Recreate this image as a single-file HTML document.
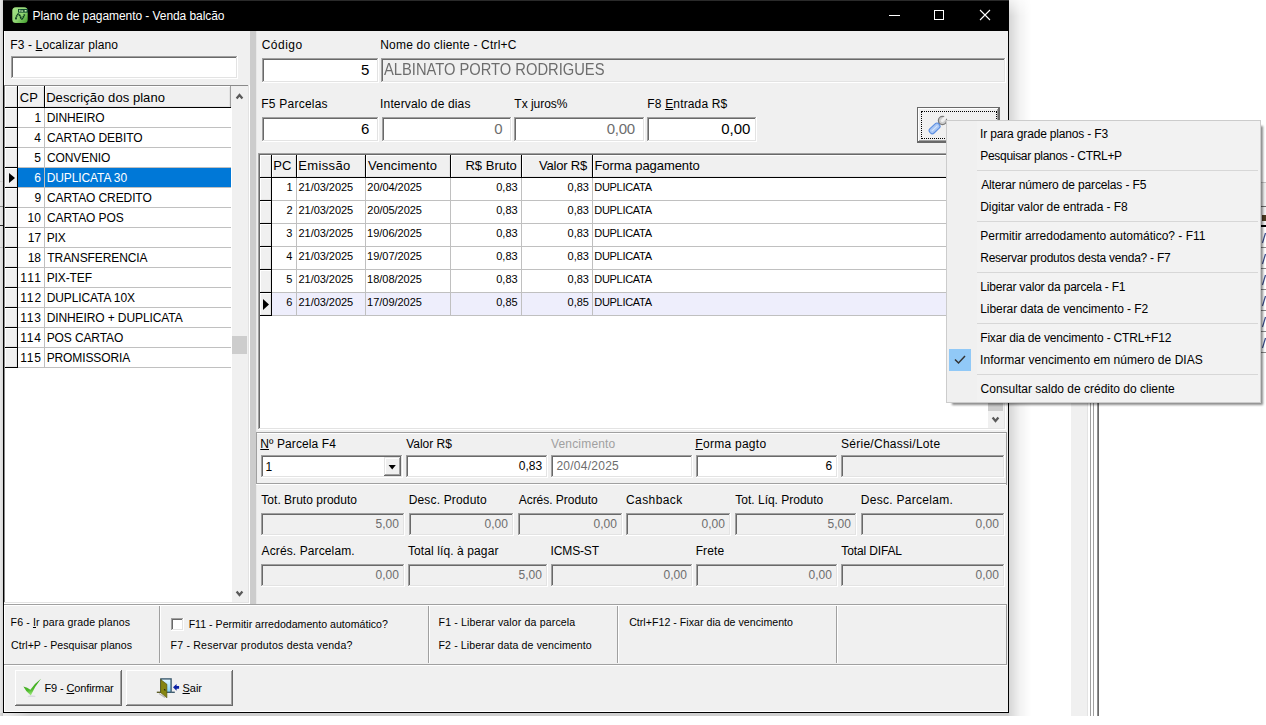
<!DOCTYPE html><html><head><meta charset="utf-8"><style>
html,body{margin:0;padding:0;}
body{width:1266px;height:725px;position:relative;overflow:hidden;background:#fff;font-family:"Liberation Sans", sans-serif;}
body div{position:absolute;box-sizing:border-box;}
.t{white-space:nowrap;line-height:1;}
u{text-decoration:underline;text-underline-offset:1px;text-decoration-thickness:1px;}
</style></head><body>
<div style="left:0;top:0;width:3px;height:716px;background:linear-gradient(90deg,#e8e8e8,#d6d6d6)"></div>
<div style="left:0px;top:181px;width:3px;height:1px;background:#cfcfcf"></div>
<div style="left:0px;top:206px;width:3px;height:1px;background:#8c8c8c"></div>
<div style="left:0px;top:225px;width:3px;height:1px;background:#2a2a2a"></div>
<div style="left:0px;top:247px;width:3px;height:1px;background:#c4c4c4"></div>
<div style="left:1071px;top:402px;width:16px;height:314px;background:#f0f0f0"></div>
<div style="left:1087px;top:402px;width:1px;height:314px;background:#e3e3e3"></div>
<div style="left:1090px;top:402px;width:1px;height:314px;background:#a0a0a0"></div>
<div style="left:1093px;top:402px;width:1px;height:314px;background:#a0a0a0"></div>
<div style="left:1097px;top:402px;width:1px;height:314px;background:#909090"></div>
<div style="left:1098px;top:402px;width:1px;height:314px;background:#6a6a6a"></div>
<div style="left:1009px;top:0px;width:22px;height:716px;background:linear-gradient(90deg,rgba(0,0,0,0.16),rgba(0,0,0,0.05) 50%,rgba(0,0,0,0));-webkit-mask-image:linear-gradient(180deg,rgba(0,0,0,0.35),#000 16px);mask-image:linear-gradient(180deg,rgba(0,0,0,0.35),#000 16px)"></div>
<div style="left:0px;top:713px;width:1009px;height:3px;background:linear-gradient(90deg,rgba(0,0,0,0.06),rgba(0,0,0,0.19) 30px,rgba(0,0,0,0.19))"></div>
<div style="left:3px;top:0px;width:1006px;height:713px;background:#000"></div>
<div style="left:4px;top:31px;width:1004px;height:681px;background:#f0f0f0"></div>
<div style="left:4px;top:31px;width:1px;height:681px;background:#ffffff"></div>
<div style="left:4px;top:711px;width:1004px;height:1px;background:#ffffff"></div>
<div style="left:3px;top:0px;width:1006px;height:1px;background:#2a2a2a"></div>
<svg style="position:absolute;left:12px;top:7px" width="16" height="16" viewBox="0 0 16 16">
<defs><linearGradient id="gi" x1="0" y1="0" x2="1" y2="1"><stop offset="0" stop-color="#a6e488"/><stop offset="0.55" stop-color="#8fd472"/><stop offset="1" stop-color="#3f9c2a"/></linearGradient></defs>
<rect x="0.3" y="0.3" width="15.4" height="15.6" rx="3.5" fill="url(#gi)"/>
<rect x="6" y="2" width="10" height="3.6" fill="#0e4a2c"/>
<rect x="7.2" y="2.8" width="1.3" height="2" fill="#c8eeb0"/><rect x="9.2" y="3.4" width="2" height="1.3" fill="#c8eeb0"/><rect x="12.6" y="3" width="2" height="1.6" fill="#c8eeb0"/>
<path d="M3.8 12.4 Q4.8 7 6.6 7.2 Q7.8 7.6 8.8 10.8 Q9.6 12.8 10.8 11.2 L12.6 7.4" stroke="#0c3a20" stroke-width="1.7" fill="none" stroke-dasharray="1.8 0.5"/>
</svg>
<div class="t" style="left:32.54px;top:10.00px;font-size:12px;color:#fff;letter-spacing:-0.069px;">Plano de pagamento - Venda balcão</div>
<div style="left:889px;top:15px;width:11px;height:1px;background:#fff"></div>
<div style="left:934px;top:10px;width:10px;height:10px;border:1px solid #fff"></div>
<svg style="position:absolute;left:979px;top:9px" width="12" height="12" viewBox="0 0 12 12"><path d="M1 1 L11 11 M11 1 L1 11" stroke="#fff" stroke-width="1.1"/></svg>
<div class="t" style="left:10.34px;top:39.00px;font-size:12px;color:#000;letter-spacing:0.120px;">F3 - <u>L</u>ocalizar plano</div>
<div style="left:11px;top:56px;width:227px;height:23px;background:#ffffff"></div>
<div style="left:11px;top:56px;width:226px;height:22px;background:#a0a0a0"></div>
<div style="left:12px;top:57px;width:225px;height:21px;background:#e3e3e3"></div>
<div style="left:12px;top:57px;width:224px;height:20px;background:#696969"></div>
<div style="left:13px;top:58px;width:223px;height:19px;background:#fff"></div>
<div style="left:4px;top:85px;width:246px;height:519px;background:#ffffff"></div>
<div style="left:4px;top:85px;width:245px;height:518px;background:#e3e3e3"></div>
<div style="left:4px;top:85px;width:244px;height:517px;background:#8a8a8a"></div>
<div style="left:5px;top:86px;width:243px;height:516px;background:#ffffff"></div>
<div style="left:232px;top:86px;width:16px;height:516px;background:#f0f0f0"></div>
<div style="left:231px;top:86px;width:1px;height:22px;background:#f0f0f0"></div>
<div style="left:232px;top:336px;width:15px;height:18px;background:#cdcdcd"></div>
<svg style="position:absolute;left:235px;top:92px" width="9" height="8" viewBox="0 0 9 8"><path d="M1.6 6.5 L4.5 3.1 L7.4 6.5" stroke="#5a5a5a" stroke-width="2.3" fill="none"/></svg>
<svg style="position:absolute;left:235px;top:590px" width="9" height="8" viewBox="0 0 9 8"><path d="M1.6 1.5 L4.5 4.9 L7.4 1.5" stroke="#5a5a5a" stroke-width="2.3" fill="none"/></svg>
<div style="left:5px;top:86px;width:13px;height:22px;background:#000"></div>
<div style="left:5px;top:86px;width:12px;height:21px;background:#ffffff"></div>
<div style="left:6px;top:87px;width:11px;height:20px;background:#e3e3e3"></div>
<div style="left:6px;top:87px;width:10px;height:19px;background:#f0f0f0"></div>
<div style="left:18px;top:86px;width:27px;height:22px;background:#000"></div>
<div style="left:18px;top:86px;width:26px;height:21px;background:#ffffff"></div>
<div style="left:19px;top:87px;width:25px;height:20px;background:#e3e3e3"></div>
<div style="left:19px;top:87px;width:24px;height:19px;background:#f0f0f0"></div>
<div style="left:45px;top:86px;width:186px;height:22px;background:#000"></div>
<div style="left:45px;top:86px;width:185px;height:21px;background:#ffffff"></div>
<div style="left:46px;top:87px;width:184px;height:20px;background:#e3e3e3"></div>
<div style="left:46px;top:87px;width:183px;height:19px;background:#f0f0f0"></div>
<div style="left:230px;top:86px;width:1px;height:21px;background:#a0a0a0"></div>
<div class="t" style="left:19.75px;top:91.00px;font-size:13px;color:#000;">CP</div>
<div class="t" style="left:46.16px;top:91.00px;font-size:13px;color:#000;letter-spacing:0.054px;">Descrição dos plano</div>
<div style="left:5px;top:108px;width:13px;height:20px;background:#000"></div>
<div style="left:5px;top:108px;width:12px;height:19px;background:#ffffff"></div>
<div style="left:6px;top:109px;width:11px;height:18px;background:#e3e3e3"></div>
<div style="left:6px;top:109px;width:10px;height:17px;background:#f0f0f0"></div>
<div style="left:18px;top:127px;width:213px;height:1px;background:#c0c0c0"></div>
<div style="left:44px;top:108px;width:1px;height:20px;background:#c0c0c0"></div>
<div class="t" style="left:-358.95px;width:400px;text-align:right;top:112.00px;font-size:12px;color:#000;">1</div>
<div class="t" style="left:46.64px;top:112.00px;font-size:12px;color:#000;letter-spacing:-0.1px;">DINHEIRO</div>
<div style="left:5px;top:128px;width:13px;height:20px;background:#000"></div>
<div style="left:5px;top:128px;width:12px;height:19px;background:#ffffff"></div>
<div style="left:6px;top:129px;width:11px;height:18px;background:#e3e3e3"></div>
<div style="left:6px;top:129px;width:10px;height:17px;background:#f0f0f0"></div>
<div style="left:18px;top:147px;width:213px;height:1px;background:#c0c0c0"></div>
<div style="left:44px;top:128px;width:1px;height:20px;background:#c0c0c0"></div>
<div class="t" style="left:-359.13px;width:400px;text-align:right;top:132.00px;font-size:12px;color:#000;">4</div>
<div class="t" style="left:47.00px;top:132.00px;font-size:12px;color:#000;letter-spacing:-0.1px;">CARTAO DEBITO</div>
<div style="left:5px;top:148px;width:13px;height:20px;background:#000"></div>
<div style="left:5px;top:148px;width:12px;height:19px;background:#ffffff"></div>
<div style="left:6px;top:149px;width:11px;height:18px;background:#e3e3e3"></div>
<div style="left:6px;top:149px;width:10px;height:17px;background:#f0f0f0"></div>
<div style="left:18px;top:167px;width:213px;height:1px;background:#c0c0c0"></div>
<div style="left:44px;top:148px;width:1px;height:20px;background:#c0c0c0"></div>
<div class="t" style="left:-359.01px;width:400px;text-align:right;top:152.00px;font-size:12px;color:#000;">5</div>
<div class="t" style="left:47.00px;top:152.00px;font-size:12px;color:#000;letter-spacing:-0.1px;">CONVENIO</div>
<div style="left:5px;top:168px;width:13px;height:20px;background:#000"></div>
<div style="left:5px;top:168px;width:12px;height:19px;background:#ffffff"></div>
<div style="left:6px;top:169px;width:11px;height:18px;background:#e3e3e3"></div>
<div style="left:6px;top:169px;width:10px;height:17px;background:#f0f0f0"></div>
<div style="left:18px;top:187px;width:213px;height:1px;background:#c0c0c0"></div>
<div style="left:44px;top:168px;width:1px;height:20px;background:#c0c0c0"></div>
<div style="left:18px;top:168px;width:26px;height:19px;background:#0078d7"></div>
<div style="left:45px;top:168px;width:186px;height:19px;background:#0078d7"></div>
<svg style="position:absolute;left:8px;top:172px" width="8" height="12" viewBox="0 0 8 12"><path d="M1 1 L7 6 L1 11 Z" fill="#000"/></svg>
<div class="t" style="left:-359.01px;width:400px;text-align:right;top:172.00px;font-size:12px;color:#fff;">6</div>
<div class="t" style="left:46.64px;top:172.00px;font-size:12px;color:#fff;letter-spacing:-0.1px;">DUPLICATA 30</div>
<div style="left:5px;top:188px;width:13px;height:20px;background:#000"></div>
<div style="left:5px;top:188px;width:12px;height:19px;background:#ffffff"></div>
<div style="left:6px;top:189px;width:11px;height:18px;background:#e3e3e3"></div>
<div style="left:6px;top:189px;width:10px;height:17px;background:#f0f0f0"></div>
<div style="left:18px;top:207px;width:213px;height:1px;background:#c0c0c0"></div>
<div style="left:44px;top:188px;width:1px;height:20px;background:#c0c0c0"></div>
<div class="t" style="left:-358.95px;width:400px;text-align:right;top:192.00px;font-size:12px;color:#000;">9</div>
<div class="t" style="left:47.00px;top:192.00px;font-size:12px;color:#000;letter-spacing:-0.1px;">CARTAO CREDITO</div>
<div style="left:5px;top:208px;width:13px;height:20px;background:#000"></div>
<div style="left:5px;top:208px;width:12px;height:19px;background:#ffffff"></div>
<div style="left:6px;top:209px;width:11px;height:18px;background:#e3e3e3"></div>
<div style="left:6px;top:209px;width:10px;height:17px;background:#f0f0f0"></div>
<div style="left:18px;top:227px;width:213px;height:1px;background:#c0c0c0"></div>
<div style="left:44px;top:208px;width:1px;height:20px;background:#c0c0c0"></div>
<div class="t" style="left:-359.05px;width:400px;text-align:right;top:212.00px;font-size:12px;color:#000;">10</div>
<div class="t" style="left:47.00px;top:212.00px;font-size:12px;color:#000;letter-spacing:-0.1px;">CARTAO POS</div>
<div style="left:5px;top:228px;width:13px;height:20px;background:#000"></div>
<div style="left:5px;top:228px;width:12px;height:19px;background:#ffffff"></div>
<div style="left:6px;top:229px;width:11px;height:18px;background:#e3e3e3"></div>
<div style="left:6px;top:229px;width:10px;height:17px;background:#f0f0f0"></div>
<div style="left:18px;top:247px;width:213px;height:1px;background:#c0c0c0"></div>
<div style="left:44px;top:228px;width:1px;height:20px;background:#c0c0c0"></div>
<div class="t" style="left:-358.87px;width:400px;text-align:right;top:232.00px;font-size:12px;color:#000;">17</div>
<div class="t" style="left:46.64px;top:232.00px;font-size:12px;color:#000;letter-spacing:-0.1px;">PIX</div>
<div style="left:5px;top:248px;width:13px;height:20px;background:#000"></div>
<div style="left:5px;top:248px;width:12px;height:19px;background:#ffffff"></div>
<div style="left:6px;top:249px;width:11px;height:18px;background:#e3e3e3"></div>
<div style="left:6px;top:249px;width:10px;height:17px;background:#f0f0f0"></div>
<div style="left:18px;top:267px;width:213px;height:1px;background:#c0c0c0"></div>
<div style="left:44px;top:248px;width:1px;height:20px;background:#c0c0c0"></div>
<div class="t" style="left:-358.99px;width:400px;text-align:right;top:252.00px;font-size:12px;color:#000;">18</div>
<div class="t" style="left:47.36px;top:252.00px;font-size:12px;color:#000;letter-spacing:-0.1px;">TRANSFERENCIA</div>
<div style="left:5px;top:268px;width:13px;height:20px;background:#000"></div>
<div style="left:5px;top:268px;width:12px;height:19px;background:#ffffff"></div>
<div style="left:6px;top:269px;width:11px;height:18px;background:#e3e3e3"></div>
<div style="left:6px;top:269px;width:10px;height:17px;background:#f0f0f0"></div>
<div style="left:18px;top:287px;width:213px;height:1px;background:#c0c0c0"></div>
<div style="left:44px;top:268px;width:1px;height:20px;background:#c0c0c0"></div>
<div class="t" style="left:-357.66px;width:400px;text-align:right;top:272.00px;font-size:12px;color:#000;letter-spacing:1.300px;">111</div>
<div class="t" style="left:46.64px;top:272.00px;font-size:12px;color:#000;letter-spacing:-0.1px;">PIX-TEF</div>
<div style="left:5px;top:288px;width:13px;height:20px;background:#000"></div>
<div style="left:5px;top:288px;width:12px;height:19px;background:#ffffff"></div>
<div style="left:6px;top:289px;width:11px;height:18px;background:#e3e3e3"></div>
<div style="left:6px;top:289px;width:10px;height:17px;background:#f0f0f0"></div>
<div style="left:18px;top:307px;width:213px;height:1px;background:#c0c0c0"></div>
<div style="left:44px;top:288px;width:1px;height:20px;background:#c0c0c0"></div>
<div class="t" style="left:-358.03px;width:400px;text-align:right;top:292.00px;font-size:12px;color:#000;letter-spacing:0.880px;">112</div>
<div class="t" style="left:46.64px;top:292.00px;font-size:12px;color:#000;letter-spacing:-0.1px;">DUPLICATA 10X</div>
<div style="left:5px;top:308px;width:13px;height:20px;background:#000"></div>
<div style="left:5px;top:308px;width:12px;height:19px;background:#ffffff"></div>
<div style="left:6px;top:309px;width:11px;height:18px;background:#e3e3e3"></div>
<div style="left:6px;top:309px;width:10px;height:17px;background:#f0f0f0"></div>
<div style="left:18px;top:327px;width:213px;height:1px;background:#c0c0c0"></div>
<div style="left:44px;top:308px;width:1px;height:20px;background:#c0c0c0"></div>
<div class="t" style="left:-358.21px;width:400px;text-align:right;top:312.00px;font-size:12px;color:#000;letter-spacing:0.820px;">113</div>
<div class="t" style="left:46.64px;top:312.00px;font-size:12px;color:#000;letter-spacing:-0.1px;">DINHEIRO + DUPLICATA</div>
<div style="left:5px;top:328px;width:13px;height:20px;background:#000"></div>
<div style="left:5px;top:328px;width:12px;height:19px;background:#ffffff"></div>
<div style="left:6px;top:329px;width:11px;height:18px;background:#e3e3e3"></div>
<div style="left:6px;top:329px;width:10px;height:17px;background:#f0f0f0"></div>
<div style="left:18px;top:347px;width:213px;height:1px;background:#c0c0c0"></div>
<div style="left:44px;top:328px;width:1px;height:20px;background:#c0c0c0"></div>
<div class="t" style="left:-358.39px;width:400px;text-align:right;top:332.00px;font-size:12px;color:#000;letter-spacing:0.760px;">114</div>
<div class="t" style="left:46.64px;top:332.00px;font-size:12px;color:#000;letter-spacing:-0.1px;">POS CARTAO</div>
<div style="left:5px;top:348px;width:13px;height:20px;background:#000"></div>
<div style="left:5px;top:348px;width:12px;height:19px;background:#ffffff"></div>
<div style="left:6px;top:349px;width:11px;height:18px;background:#e3e3e3"></div>
<div style="left:6px;top:349px;width:10px;height:17px;background:#f0f0f0"></div>
<div style="left:18px;top:367px;width:213px;height:1px;background:#c0c0c0"></div>
<div style="left:44px;top:348px;width:1px;height:20px;background:#c0c0c0"></div>
<div class="t" style="left:-358.21px;width:400px;text-align:right;top:352.00px;font-size:12px;color:#000;letter-spacing:0.820px;">115</div>
<div class="t" style="left:46.64px;top:352.00px;font-size:12px;color:#000;letter-spacing:-0.1px;">PROMISSORIA</div>
<div style="left:250px;top:31px;width:6px;height:573px;background:#cccccc"></div>
<div style="left:256px;top:31px;width:1px;height:573px;background:#e8e8e8"></div>
<div class="t" style="left:261.70px;top:39.00px;font-size:12px;color:#000;letter-spacing:0.488px;">Código</div>
<div class="t" style="left:380.24px;top:39.00px;font-size:12px;color:#000;letter-spacing:0.195px;">Nome do cliente - Ctrl+C</div>
<div style="left:262px;top:58px;width:117px;height:25px;background:#ffffff"></div>
<div style="left:262px;top:58px;width:116px;height:24px;background:#a0a0a0"></div>
<div style="left:263px;top:59px;width:115px;height:23px;background:#e3e3e3"></div>
<div style="left:263px;top:59px;width:114px;height:22px;background:#696969"></div>
<div style="left:264px;top:60px;width:113px;height:21px;background:#fff"></div>
<div class="t" style="left:-30.78px;width:400px;text-align:right;top:62.00px;font-size:15px;color:#000;">5</div>
<div style="left:381px;top:58px;width:625px;height:25px;background:#ffffff"></div>
<div style="left:381px;top:58px;width:624px;height:24px;background:#a0a0a0"></div>
<div style="left:382px;top:59px;width:623px;height:23px;background:#e3e3e3"></div>
<div style="left:382px;top:59px;width:622px;height:22px;background:#696969"></div>
<div style="left:383px;top:60px;width:621px;height:21px;background:#f0f0f0"></div>
<div class="t" style="left:383.90px;top:62.00px;font-size:16px;color:#6d6d6d;transform:scaleX(0.9195);transform-origin:0 0;">ALBINATO PORTO RODRIGUES</div>
<div class="t" style="left:261.24px;top:98.00px;font-size:12px;color:#000;letter-spacing:0.236px;">F5 Parcelas</div>
<div class="t" style="left:380.12px;top:98.00px;font-size:12px;color:#000;letter-spacing:0.139px;">Intervalo de dias</div>
<div class="t" style="left:514.36px;top:98.00px;font-size:12px;color:#000;letter-spacing:-0.023px;">Tx juros%</div>
<div class="t" style="left:647.34px;top:98.00px;font-size:12px;color:#000;letter-spacing:0.153px;">F8 <u>E</u>ntrada R$</div>
<div style="left:262px;top:117px;width:117px;height:25px;background:#ffffff"></div>
<div style="left:262px;top:117px;width:116px;height:24px;background:#a0a0a0"></div>
<div style="left:263px;top:118px;width:115px;height:23px;background:#e3e3e3"></div>
<div style="left:263px;top:118px;width:114px;height:22px;background:#696969"></div>
<div style="left:264px;top:119px;width:113px;height:21px;background:#fff"></div>
<div class="t" style="left:-30.78px;width:400px;text-align:right;top:121.00px;font-size:15px;color:#000;">6</div>
<div style="left:382px;top:117px;width:130px;height:25px;background:#ffffff"></div>
<div style="left:382px;top:117px;width:129px;height:24px;background:#a0a0a0"></div>
<div style="left:383px;top:118px;width:128px;height:23px;background:#e3e3e3"></div>
<div style="left:383px;top:118px;width:127px;height:22px;background:#696969"></div>
<div style="left:384px;top:119px;width:126px;height:21px;background:#fff"></div>
<div class="t" style="left:102.54px;width:400px;text-align:right;top:121.00px;font-size:15px;color:#6d6d6d;">0</div>
<div style="left:514px;top:117px;width:131px;height:25px;background:#ffffff"></div>
<div style="left:514px;top:117px;width:130px;height:24px;background:#a0a0a0"></div>
<div style="left:515px;top:118px;width:129px;height:23px;background:#e3e3e3"></div>
<div style="left:515px;top:118px;width:128px;height:22px;background:#696969"></div>
<div style="left:516px;top:119px;width:127px;height:21px;background:#fff"></div>
<div class="t" style="left:234.76px;width:400px;text-align:right;top:121.00px;font-size:15px;color:#6d6d6d;letter-spacing:-0.283px;">0,00</div>
<div style="left:647px;top:117px;width:110px;height:25px;background:#ffffff"></div>
<div style="left:647px;top:117px;width:109px;height:24px;background:#a0a0a0"></div>
<div style="left:648px;top:118px;width:108px;height:23px;background:#e3e3e3"></div>
<div style="left:648px;top:118px;width:107px;height:22px;background:#696969"></div>
<div style="left:649px;top:119px;width:106px;height:21px;background:#fff"></div>
<div class="t" style="left:350.34px;width:400px;text-align:right;top:121.00px;font-size:15px;color:#000;">0,00</div>
<div style="left:917px;top:107px;width:83px;height:36px;background:#696969"></div>
<div style="left:918px;top:108px;width:80px;height:33px;background:#ffffff"></div>
<div style="left:919px;top:109px;width:79px;height:32px;background:#a0a0a0"></div>
<div style="left:919px;top:109px;width:78px;height:31px;background:#f0f0f0"></div>
<div style="left:921px;top:111px;width:76px;height:28px;border:1px dotted #000"></div>
<svg style="position:absolute;left:924px;top:112px" width="26" height="26" viewBox="0 0 26 26">
<path d="M14.4 12.2 L17.2 9.4" stroke="#8a8a8a" stroke-width="2.6"/>
<circle cx="18.5" cy="8.5" r="4.1" fill="#cfcfcf" stroke="#7a7a7a" stroke-width="1.3"/>
<path d="M18.8 8.2 L23.8 3.2" stroke="#f0f0f0" stroke-width="3.2"/>
<circle cx="18.4" cy="8.6" r="1.6" fill="#f0f0f0"/>
<g transform="rotate(-43 10.6 16.4)"><rect x="4.5" y="13.4" width="12.2" height="6" rx="2.6" fill="#a9c7f4" stroke="#5b8ee2" stroke-width="1.1"/><rect x="6.6" y="15.9" width="8" height="1.1" fill="#d6e5fb"/></g>
</svg>
<div style="left:258px;top:153px;width:748px;height:277px;background:#ffffff"></div>
<div style="left:258px;top:153px;width:747px;height:276px;background:#a0a0a0"></div>
<div style="left:259px;top:154px;width:746px;height:275px;background:#e3e3e3"></div>
<div style="left:259px;top:154px;width:745px;height:274px;background:#696969"></div>
<div style="left:260px;top:155px;width:744px;height:273px;background:#ffffff"></div>
<div style="left:988px;top:155px;width:16px;height:273px;background:#f0f0f0"></div>
<div style="left:988px;top:300px;width:15px;height:111px;background:#cdcdcd"></div>
<svg style="position:absolute;left:991px;top:416px" width="9" height="8" viewBox="0 0 9 8"><path d="M1.6 1.5 L4.5 4.9 L7.4 1.5" stroke="#5a5a5a" stroke-width="2.3" fill="none"/></svg>
<div style="left:260px;top:155px;width:12px;height:23px;background:#000"></div>
<div style="left:260px;top:155px;width:11px;height:22px;background:#ffffff"></div>
<div style="left:261px;top:156px;width:10px;height:21px;background:#e3e3e3"></div>
<div style="left:261px;top:156px;width:9px;height:20px;background:#f0f0f0"></div>
<div style="left:272px;top:155px;width:25px;height:23px;background:#000"></div>
<div style="left:272px;top:155px;width:24px;height:22px;background:#ffffff"></div>
<div style="left:273px;top:156px;width:23px;height:21px;background:#e3e3e3"></div>
<div style="left:273px;top:156px;width:22px;height:20px;background:#f0f0f0"></div>
<div style="left:297px;top:155px;width:69px;height:23px;background:#000"></div>
<div style="left:297px;top:155px;width:68px;height:22px;background:#ffffff"></div>
<div style="left:298px;top:156px;width:67px;height:21px;background:#e3e3e3"></div>
<div style="left:298px;top:156px;width:66px;height:20px;background:#f0f0f0"></div>
<div style="left:366px;top:155px;width:85px;height:23px;background:#000"></div>
<div style="left:366px;top:155px;width:84px;height:22px;background:#ffffff"></div>
<div style="left:367px;top:156px;width:83px;height:21px;background:#e3e3e3"></div>
<div style="left:367px;top:156px;width:82px;height:20px;background:#f0f0f0"></div>
<div style="left:451px;top:155px;width:71px;height:23px;background:#000"></div>
<div style="left:451px;top:155px;width:70px;height:22px;background:#ffffff"></div>
<div style="left:452px;top:156px;width:69px;height:21px;background:#e3e3e3"></div>
<div style="left:452px;top:156px;width:68px;height:20px;background:#f0f0f0"></div>
<div style="left:522px;top:155px;width:71px;height:23px;background:#000"></div>
<div style="left:522px;top:155px;width:70px;height:22px;background:#ffffff"></div>
<div style="left:523px;top:156px;width:69px;height:21px;background:#e3e3e3"></div>
<div style="left:523px;top:156px;width:68px;height:20px;background:#f0f0f0"></div>
<div style="left:593px;top:155px;width:395px;height:23px;background:#000"></div>
<div style="left:593px;top:155px;width:394px;height:22px;background:#ffffff"></div>
<div style="left:594px;top:156px;width:393px;height:21px;background:#e3e3e3"></div>
<div style="left:594px;top:156px;width:392px;height:20px;background:#f0f0f0"></div>
<div class="t" style="left:273.26px;top:159.00px;font-size:13px;color:#000;">PC</div>
<div class="t" style="left:298.16px;top:159.00px;font-size:13px;color:#000;letter-spacing:0.367px;">Emissão</div>
<div class="t" style="left:368.04px;top:159.00px;font-size:13px;color:#000;letter-spacing:0.118px;">Vencimento</div>
<div class="t" style="left:116.85px;width:400px;text-align:right;top:159.00px;font-size:13px;color:#000;letter-spacing:0.011px;">R$ Bruto</div>
<div class="t" style="left:187.12px;width:400px;text-align:right;top:159.00px;font-size:13px;color:#000;letter-spacing:-0.191px;">Valor R$</div>
<div class="t" style="left:594.46px;top:159.00px;font-size:13px;color:#000;letter-spacing:-0.061px;">Forma pagamento</div>
<div style="left:260px;top:178px;width:12px;height:23px;background:#000"></div>
<div style="left:260px;top:178px;width:11px;height:22px;background:#ffffff"></div>
<div style="left:261px;top:179px;width:10px;height:21px;background:#e3e3e3"></div>
<div style="left:261px;top:179px;width:9px;height:20px;background:#f0f0f0"></div>
<div style="left:272px;top:200px;width:716px;height:1px;background:#c0c0c0"></div>
<div style="left:296px;top:178px;width:1px;height:23px;background:#c0c0c0"></div>
<div style="left:365px;top:178px;width:1px;height:23px;background:#c0c0c0"></div>
<div style="left:450px;top:178px;width:1px;height:23px;background:#c0c0c0"></div>
<div style="left:521px;top:178px;width:1px;height:23px;background:#c0c0c0"></div>
<div style="left:592px;top:178px;width:1px;height:23px;background:#c0c0c0"></div>
<div class="t" style="left:-107.49px;width:400px;text-align:right;top:182.00px;font-size:11px;color:#000;">1</div>
<div class="t" style="left:298.55px;top:182.00px;font-size:11px;color:#000;letter-spacing:-0.052px;">21/03/2025</div>
<div class="t" style="left:367.35px;top:182.00px;font-size:11px;color:#000;letter-spacing:-0.052px;">20/04/2025</div>
<div class="t" style="left:117.65px;width:400px;text-align:right;top:182.00px;font-size:11px;color:#000;">0,83</div>
<div class="t" style="left:188.95px;width:400px;text-align:right;top:182.00px;font-size:11px;color:#000;">0,83</div>
<div class="t" style="left:594.22px;top:182.00px;font-size:11px;color:#000;letter-spacing:-0.285px;">DUPLICATA</div>
<div style="left:260px;top:201px;width:12px;height:23px;background:#000"></div>
<div style="left:260px;top:201px;width:11px;height:22px;background:#ffffff"></div>
<div style="left:261px;top:202px;width:10px;height:21px;background:#e3e3e3"></div>
<div style="left:261px;top:202px;width:9px;height:20px;background:#f0f0f0"></div>
<div style="left:272px;top:223px;width:716px;height:1px;background:#c0c0c0"></div>
<div style="left:296px;top:201px;width:1px;height:23px;background:#c0c0c0"></div>
<div style="left:365px;top:201px;width:1px;height:23px;background:#c0c0c0"></div>
<div style="left:450px;top:201px;width:1px;height:23px;background:#c0c0c0"></div>
<div style="left:521px;top:201px;width:1px;height:23px;background:#c0c0c0"></div>
<div style="left:592px;top:201px;width:1px;height:23px;background:#c0c0c0"></div>
<div class="t" style="left:-107.44px;width:400px;text-align:right;top:205.00px;font-size:11px;color:#000;">2</div>
<div class="t" style="left:298.55px;top:205.00px;font-size:11px;color:#000;letter-spacing:-0.052px;">21/03/2025</div>
<div class="t" style="left:367.35px;top:205.00px;font-size:11px;color:#000;letter-spacing:-0.052px;">20/05/2025</div>
<div class="t" style="left:117.65px;width:400px;text-align:right;top:205.00px;font-size:11px;color:#000;">0,83</div>
<div class="t" style="left:188.95px;width:400px;text-align:right;top:205.00px;font-size:11px;color:#000;">0,83</div>
<div class="t" style="left:594.22px;top:205.00px;font-size:11px;color:#000;letter-spacing:-0.285px;">DUPLICATA</div>
<div style="left:260px;top:224px;width:12px;height:23px;background:#000"></div>
<div style="left:260px;top:224px;width:11px;height:22px;background:#ffffff"></div>
<div style="left:261px;top:225px;width:10px;height:21px;background:#e3e3e3"></div>
<div style="left:261px;top:225px;width:9px;height:20px;background:#f0f0f0"></div>
<div style="left:272px;top:246px;width:716px;height:1px;background:#c0c0c0"></div>
<div style="left:296px;top:224px;width:1px;height:23px;background:#c0c0c0"></div>
<div style="left:365px;top:224px;width:1px;height:23px;background:#c0c0c0"></div>
<div style="left:450px;top:224px;width:1px;height:23px;background:#c0c0c0"></div>
<div style="left:521px;top:224px;width:1px;height:23px;background:#c0c0c0"></div>
<div style="left:592px;top:224px;width:1px;height:23px;background:#c0c0c0"></div>
<div class="t" style="left:-107.55px;width:400px;text-align:right;top:228.00px;font-size:11px;color:#000;">3</div>
<div class="t" style="left:298.55px;top:228.00px;font-size:11px;color:#000;letter-spacing:-0.052px;">21/03/2025</div>
<div class="t" style="left:367.07px;top:228.00px;font-size:11px;color:#000;letter-spacing:-0.021px;">19/06/2025</div>
<div class="t" style="left:117.65px;width:400px;text-align:right;top:228.00px;font-size:11px;color:#000;">0,83</div>
<div class="t" style="left:188.95px;width:400px;text-align:right;top:228.00px;font-size:11px;color:#000;">0,83</div>
<div class="t" style="left:594.22px;top:228.00px;font-size:11px;color:#000;letter-spacing:-0.285px;">DUPLICATA</div>
<div style="left:260px;top:247px;width:12px;height:23px;background:#000"></div>
<div style="left:260px;top:247px;width:11px;height:22px;background:#ffffff"></div>
<div style="left:261px;top:248px;width:10px;height:21px;background:#e3e3e3"></div>
<div style="left:261px;top:248px;width:9px;height:20px;background:#f0f0f0"></div>
<div style="left:272px;top:269px;width:716px;height:1px;background:#c0c0c0"></div>
<div style="left:296px;top:247px;width:1px;height:23px;background:#c0c0c0"></div>
<div style="left:365px;top:247px;width:1px;height:23px;background:#c0c0c0"></div>
<div style="left:450px;top:247px;width:1px;height:23px;background:#c0c0c0"></div>
<div style="left:521px;top:247px;width:1px;height:23px;background:#c0c0c0"></div>
<div style="left:592px;top:247px;width:1px;height:23px;background:#c0c0c0"></div>
<div class="t" style="left:-107.66px;width:400px;text-align:right;top:251.00px;font-size:11px;color:#000;">4</div>
<div class="t" style="left:298.55px;top:251.00px;font-size:11px;color:#000;letter-spacing:-0.052px;">21/03/2025</div>
<div class="t" style="left:367.07px;top:251.00px;font-size:11px;color:#000;letter-spacing:-0.021px;">19/07/2025</div>
<div class="t" style="left:117.65px;width:400px;text-align:right;top:251.00px;font-size:11px;color:#000;">0,83</div>
<div class="t" style="left:188.95px;width:400px;text-align:right;top:251.00px;font-size:11px;color:#000;">0,83</div>
<div class="t" style="left:594.22px;top:251.00px;font-size:11px;color:#000;letter-spacing:-0.285px;">DUPLICATA</div>
<div style="left:260px;top:270px;width:12px;height:23px;background:#000"></div>
<div style="left:260px;top:270px;width:11px;height:22px;background:#ffffff"></div>
<div style="left:261px;top:271px;width:10px;height:21px;background:#e3e3e3"></div>
<div style="left:261px;top:271px;width:9px;height:20px;background:#f0f0f0"></div>
<div style="left:272px;top:292px;width:716px;height:1px;background:#c0c0c0"></div>
<div style="left:296px;top:270px;width:1px;height:23px;background:#c0c0c0"></div>
<div style="left:365px;top:270px;width:1px;height:23px;background:#c0c0c0"></div>
<div style="left:450px;top:270px;width:1px;height:23px;background:#c0c0c0"></div>
<div style="left:521px;top:270px;width:1px;height:23px;background:#c0c0c0"></div>
<div style="left:592px;top:270px;width:1px;height:23px;background:#c0c0c0"></div>
<div class="t" style="left:-107.55px;width:400px;text-align:right;top:274.00px;font-size:11px;color:#000;">5</div>
<div class="t" style="left:298.55px;top:274.00px;font-size:11px;color:#000;letter-spacing:-0.052px;">21/03/2025</div>
<div class="t" style="left:367.07px;top:274.00px;font-size:11px;color:#000;letter-spacing:-0.021px;">18/08/2025</div>
<div class="t" style="left:117.65px;width:400px;text-align:right;top:274.00px;font-size:11px;color:#000;">0,83</div>
<div class="t" style="left:188.95px;width:400px;text-align:right;top:274.00px;font-size:11px;color:#000;">0,83</div>
<div class="t" style="left:594.22px;top:274.00px;font-size:11px;color:#000;letter-spacing:-0.285px;">DUPLICATA</div>
<div style="left:260px;top:293px;width:12px;height:23px;background:#000"></div>
<div style="left:260px;top:293px;width:11px;height:22px;background:#ffffff"></div>
<div style="left:261px;top:294px;width:10px;height:21px;background:#e3e3e3"></div>
<div style="left:261px;top:294px;width:9px;height:20px;background:#f0f0f0"></div>
<div style="left:272px;top:293px;width:716px;height:22px;background:#eeeefc"></div>
<svg style="position:absolute;left:262px;top:298px" width="8" height="13" viewBox="0 0 8 13"><path d="M1 1 L7 6.5 L1 12 Z" fill="#000"/></svg>
<div style="left:272px;top:315px;width:716px;height:1px;background:#c0c0c0"></div>
<div style="left:296px;top:293px;width:1px;height:23px;background:#c0c0c0"></div>
<div style="left:365px;top:293px;width:1px;height:23px;background:#c0c0c0"></div>
<div style="left:450px;top:293px;width:1px;height:23px;background:#c0c0c0"></div>
<div style="left:521px;top:293px;width:1px;height:23px;background:#c0c0c0"></div>
<div style="left:592px;top:293px;width:1px;height:23px;background:#c0c0c0"></div>
<div class="t" style="left:-107.55px;width:400px;text-align:right;top:297.00px;font-size:11px;color:#000;">6</div>
<div class="t" style="left:298.55px;top:297.00px;font-size:11px;color:#000;letter-spacing:-0.052px;">21/03/2025</div>
<div class="t" style="left:367.07px;top:297.00px;font-size:11px;color:#000;letter-spacing:-0.021px;">17/09/2025</div>
<div class="t" style="left:117.65px;width:400px;text-align:right;top:297.00px;font-size:11px;color:#000;">0,85</div>
<div class="t" style="left:188.95px;width:400px;text-align:right;top:297.00px;font-size:11px;color:#000;">0,85</div>
<div class="t" style="left:594.22px;top:297.00px;font-size:11px;color:#000;letter-spacing:-0.285px;">DUPLICATA</div>
<div style="left:256px;top:432px;width:751px;height:1px;background:#a0a0a0"></div>
<div style="left:256px;top:433px;width:751px;height:1px;background:#ffffff"></div>
<div style="left:256px;top:432px;width:1px;height:53px;background:#a0a0a0"></div>
<div style="left:256px;top:483px;width:751px;height:1px;background:#a0a0a0"></div>
<div style="left:256px;top:484px;width:751px;height:1px;background:#ffffff"></div>
<div style="left:1006px;top:432px;width:1px;height:53px;background:#a0a0a0"></div>
<div class="t" style="left:260.24px;top:438.00px;font-size:12px;color:#000;letter-spacing:0.102px;"><u>N</u>º Parcela F4</div>
<div class="t" style="left:406.14px;top:438.00px;font-size:12px;color:#000;">Valor R$</div>
<div class="t" style="left:550.94px;top:438.00px;font-size:12px;color:#a0a0a0;letter-spacing:0.182px;">Vencimento</div>
<div class="t" style="left:695.34px;top:438.00px;font-size:12px;color:#000;letter-spacing:0.270px;"><u>F</u>orma pagto</div>
<div class="t" style="left:840.96px;top:438.00px;font-size:12px;color:#000;letter-spacing:0.275px;">Série/Chassi/Lote</div>
<div style="left:261px;top:455px;width:142px;height:23px;background:#ffffff"></div>
<div style="left:261px;top:455px;width:141px;height:22px;background:#a0a0a0"></div>
<div style="left:262px;top:456px;width:140px;height:21px;background:#e3e3e3"></div>
<div style="left:262px;top:456px;width:139px;height:20px;background:#696969"></div>
<div style="left:263px;top:457px;width:138px;height:19px;background:#fff"></div>
<div style="left:384px;top:457px;width:17px;height:19px;background:#696969"></div>
<div style="left:384px;top:457px;width:16px;height:18px;background:#e3e3e3"></div>
<div style="left:385px;top:458px;width:15px;height:17px;background:#a0a0a0"></div>
<div style="left:385px;top:458px;width:14px;height:16px;background:#ffffff"></div>
<div style="left:386px;top:459px;width:13px;height:15px;background:#f0f0f0"></div>
<svg style="position:absolute;left:388px;top:465px" width="9" height="5" viewBox="0 0 9 5"><path d="M0.6 0 L7.8 0 L4.2 4.4 Z" fill="#000"/></svg>
<div class="t" style="left:265.60px;top:461.00px;font-size:12px;color:#000;">1</div>
<div style="left:406px;top:455px;width:142px;height:23px;background:#ffffff"></div>
<div style="left:406px;top:455px;width:141px;height:22px;background:#a0a0a0"></div>
<div style="left:407px;top:456px;width:140px;height:21px;background:#e3e3e3"></div>
<div style="left:407px;top:456px;width:139px;height:20px;background:#696969"></div>
<div style="left:408px;top:457px;width:138px;height:19px;background:#fff"></div>
<div class="t" style="left:142.10px;width:400px;text-align:right;top:460.00px;font-size:12px;color:#000;">0,83</div>
<div style="left:551px;top:455px;width:142px;height:23px;background:#ffffff"></div>
<div style="left:551px;top:455px;width:141px;height:22px;background:#a0a0a0"></div>
<div style="left:552px;top:456px;width:140px;height:21px;background:#e3e3e3"></div>
<div style="left:552px;top:456px;width:139px;height:20px;background:#696969"></div>
<div style="left:553px;top:457px;width:138px;height:19px;background:#fff"></div>
<div class="t" style="left:556.40px;top:460.00px;font-size:12px;color:#6d6d6d;letter-spacing:0.258px;">20/04/2025</div>
<div style="left:696px;top:455px;width:142px;height:23px;background:#ffffff"></div>
<div style="left:696px;top:455px;width:141px;height:22px;background:#a0a0a0"></div>
<div style="left:697px;top:456px;width:140px;height:21px;background:#e3e3e3"></div>
<div style="left:697px;top:456px;width:139px;height:20px;background:#696969"></div>
<div style="left:698px;top:457px;width:138px;height:19px;background:#fff"></div>
<div class="t" style="left:432.09px;width:400px;text-align:right;top:460.00px;font-size:12px;color:#000;">6</div>
<div style="left:841px;top:455px;width:164px;height:23px;background:#ffffff"></div>
<div style="left:841px;top:455px;width:163px;height:22px;background:#a0a0a0"></div>
<div style="left:842px;top:456px;width:162px;height:21px;background:#e3e3e3"></div>
<div style="left:842px;top:456px;width:161px;height:20px;background:#696969"></div>
<div style="left:843px;top:457px;width:160px;height:19px;background:#f0f0f0"></div>
<div class="t" style="left:261.36px;top:494.00px;font-size:12px;color:#000;letter-spacing:0.013px;">Tot. Bruto produto</div>
<div class="t" style="left:408.64px;top:494.00px;font-size:12px;color:#000;letter-spacing:0.168px;">Desc. Produto</div>
<div class="t" style="left:518.70px;top:494.00px;font-size:12px;color:#000;letter-spacing:-0.023px;">Acrés. Produto</div>
<div class="t" style="left:626.00px;top:494.00px;font-size:12px;color:#000;letter-spacing:0.409px;">Cashback</div>
<div class="t" style="left:735.36px;top:494.00px;font-size:12px;color:#000;letter-spacing:-0.012px;">Tot. Líq. Produto</div>
<div class="t" style="left:860.74px;top:494.00px;font-size:12px;color:#000;letter-spacing:0.294px;">Desc. Parcelam.</div>
<div style="left:261px;top:513px;width:144px;height:23px;background:#ffffff"></div>
<div style="left:261px;top:513px;width:143px;height:22px;background:#a0a0a0"></div>
<div style="left:262px;top:514px;width:142px;height:21px;background:#e3e3e3"></div>
<div style="left:262px;top:514px;width:141px;height:20px;background:#696969"></div>
<div style="left:263px;top:515px;width:140px;height:19px;background:#f0f0f0"></div>
<div class="t" style="left:-1.16px;width:400px;text-align:right;top:518.00px;font-size:12px;color:#6d6d6d;">5,00</div>
<div style="left:409px;top:513px;width:105px;height:23px;background:#ffffff"></div>
<div style="left:409px;top:513px;width:104px;height:22px;background:#a0a0a0"></div>
<div style="left:410px;top:514px;width:103px;height:21px;background:#e3e3e3"></div>
<div style="left:410px;top:514px;width:102px;height:20px;background:#696969"></div>
<div style="left:411px;top:515px;width:101px;height:19px;background:#f0f0f0"></div>
<div class="t" style="left:107.84px;width:400px;text-align:right;top:518.00px;font-size:12px;color:#6d6d6d;">0,00</div>
<div style="left:518px;top:513px;width:105px;height:23px;background:#ffffff"></div>
<div style="left:518px;top:513px;width:104px;height:22px;background:#a0a0a0"></div>
<div style="left:519px;top:514px;width:103px;height:21px;background:#e3e3e3"></div>
<div style="left:519px;top:514px;width:102px;height:20px;background:#696969"></div>
<div style="left:520px;top:515px;width:101px;height:19px;background:#f0f0f0"></div>
<div class="t" style="left:216.84px;width:400px;text-align:right;top:518.00px;font-size:12px;color:#6d6d6d;">0,00</div>
<div style="left:626px;top:513px;width:105px;height:23px;background:#ffffff"></div>
<div style="left:626px;top:513px;width:104px;height:22px;background:#a0a0a0"></div>
<div style="left:627px;top:514px;width:103px;height:21px;background:#e3e3e3"></div>
<div style="left:627px;top:514px;width:102px;height:20px;background:#696969"></div>
<div style="left:628px;top:515px;width:101px;height:19px;background:#f0f0f0"></div>
<div class="t" style="left:324.84px;width:400px;text-align:right;top:518.00px;font-size:12px;color:#6d6d6d;">0,00</div>
<div style="left:735px;top:513px;width:122px;height:23px;background:#ffffff"></div>
<div style="left:735px;top:513px;width:121px;height:22px;background:#a0a0a0"></div>
<div style="left:736px;top:514px;width:120px;height:21px;background:#e3e3e3"></div>
<div style="left:736px;top:514px;width:119px;height:20px;background:#696969"></div>
<div style="left:737px;top:515px;width:118px;height:19px;background:#f0f0f0"></div>
<div class="t" style="left:450.84px;width:400px;text-align:right;top:518.00px;font-size:12px;color:#6d6d6d;">5,00</div>
<div style="left:861px;top:513px;width:144px;height:23px;background:#ffffff"></div>
<div style="left:861px;top:513px;width:143px;height:22px;background:#a0a0a0"></div>
<div style="left:862px;top:514px;width:142px;height:21px;background:#e3e3e3"></div>
<div style="left:862px;top:514px;width:141px;height:20px;background:#696969"></div>
<div style="left:863px;top:515px;width:140px;height:19px;background:#f0f0f0"></div>
<div class="t" style="left:598.84px;width:400px;text-align:right;top:518.00px;font-size:12px;color:#6d6d6d;">0,00</div>
<div class="t" style="left:261.60px;top:545.00px;font-size:12px;color:#000;letter-spacing:0.111px;">Acrés. Parcelam.</div>
<div class="t" style="left:407.96px;top:545.00px;font-size:12px;color:#000;letter-spacing:0.102px;">Total líq. à pagar</div>
<div class="t" style="left:550.62px;top:545.00px;font-size:12px;color:#000;letter-spacing:-0.150px;">ICMS-ST</div>
<div class="t" style="left:695.64px;top:545.00px;font-size:12px;color:#000;letter-spacing:0.120px;">Frete</div>
<div class="t" style="left:841.36px;top:545.00px;font-size:12px;color:#000;letter-spacing:-0.134px;">Total DIFAL</div>
<div style="left:261px;top:564px;width:144px;height:23px;background:#ffffff"></div>
<div style="left:261px;top:564px;width:143px;height:22px;background:#a0a0a0"></div>
<div style="left:262px;top:565px;width:142px;height:21px;background:#e3e3e3"></div>
<div style="left:262px;top:565px;width:141px;height:20px;background:#696969"></div>
<div style="left:263px;top:566px;width:140px;height:19px;background:#f0f0f0"></div>
<div class="t" style="left:-1.16px;width:400px;text-align:right;top:569.00px;font-size:12px;color:#6d6d6d;">0,00</div>
<div style="left:408px;top:564px;width:140px;height:23px;background:#ffffff"></div>
<div style="left:408px;top:564px;width:139px;height:22px;background:#a0a0a0"></div>
<div style="left:409px;top:565px;width:138px;height:21px;background:#e3e3e3"></div>
<div style="left:409px;top:565px;width:137px;height:20px;background:#696969"></div>
<div style="left:410px;top:566px;width:136px;height:19px;background:#f0f0f0"></div>
<div class="t" style="left:141.84px;width:400px;text-align:right;top:569.00px;font-size:12px;color:#6d6d6d;">5,00</div>
<div style="left:551px;top:564px;width:142px;height:23px;background:#ffffff"></div>
<div style="left:551px;top:564px;width:141px;height:22px;background:#a0a0a0"></div>
<div style="left:552px;top:565px;width:140px;height:21px;background:#e3e3e3"></div>
<div style="left:552px;top:565px;width:139px;height:20px;background:#696969"></div>
<div style="left:553px;top:566px;width:138px;height:19px;background:#f0f0f0"></div>
<div class="t" style="left:286.84px;width:400px;text-align:right;top:569.00px;font-size:12px;color:#6d6d6d;">0,00</div>
<div style="left:696px;top:564px;width:142px;height:23px;background:#ffffff"></div>
<div style="left:696px;top:564px;width:141px;height:22px;background:#a0a0a0"></div>
<div style="left:697px;top:565px;width:140px;height:21px;background:#e3e3e3"></div>
<div style="left:697px;top:565px;width:139px;height:20px;background:#696969"></div>
<div style="left:698px;top:566px;width:138px;height:19px;background:#f0f0f0"></div>
<div class="t" style="left:431.84px;width:400px;text-align:right;top:569.00px;font-size:12px;color:#6d6d6d;">0,00</div>
<div style="left:841px;top:564px;width:164px;height:23px;background:#ffffff"></div>
<div style="left:841px;top:564px;width:163px;height:22px;background:#a0a0a0"></div>
<div style="left:842px;top:565px;width:162px;height:21px;background:#e3e3e3"></div>
<div style="left:842px;top:565px;width:161px;height:20px;background:#696969"></div>
<div style="left:843px;top:566px;width:160px;height:19px;background:#f0f0f0"></div>
<div class="t" style="left:598.84px;width:400px;text-align:right;top:569.00px;font-size:12px;color:#6d6d6d;">0,00</div>
<div style="left:4px;top:604px;width:1003px;height:1px;background:#a0a0a0"></div>
<div style="left:4px;top:605px;width:1003px;height:1px;background:#ffffff"></div>
<div style="left:4px;top:664px;width:1003px;height:1px;background:#a0a0a0"></div>
<div style="left:4px;top:665px;width:1003px;height:1px;background:#ffffff"></div>
<div style="left:1006px;top:604px;width:1px;height:61px;background:#a0a0a0"></div>
<div style="left:159px;top:606px;width:1px;height:57px;background:#a0a0a0"></div>
<div style="left:160px;top:606px;width:1px;height:57px;background:#ffffff"></div>
<div style="left:428px;top:606px;width:1px;height:57px;background:#a0a0a0"></div>
<div style="left:429px;top:606px;width:1px;height:57px;background:#ffffff"></div>
<div style="left:617px;top:606px;width:1px;height:57px;background:#a0a0a0"></div>
<div style="left:618px;top:606px;width:1px;height:57px;background:#ffffff"></div>
<div style="left:836px;top:606px;width:1px;height:57px;background:#a0a0a0"></div>
<div style="left:837px;top:606px;width:1px;height:57px;background:#ffffff"></div>
<div class="t" style="left:10.55px;top:617.00px;font-size:10.6px;color:#000;letter-spacing:0.124px;">F6 - <u>I</u>r para grade planos</div>
<div class="t" style="left:11.07px;top:640.00px;font-size:10.6px;color:#000;letter-spacing:0.029px;">Ctrl+P - Pesquisar planos</div>
<div style="left:171px;top:618px;width:13px;height:13px;background:#ffffff"></div>
<div style="left:171px;top:618px;width:12px;height:12px;background:#a0a0a0"></div>
<div style="left:172px;top:619px;width:11px;height:11px;background:#e3e3e3"></div>
<div style="left:172px;top:619px;width:10px;height:10px;background:#696969"></div>
<div style="left:173px;top:620px;width:9px;height:9px;background:#fff"></div>
<div class="t" style="left:188.65px;top:619.00px;font-size:10.6px;color:#000;letter-spacing:0.011px;">F11 - Permitir arredodamento automático?</div>
<div class="t" style="left:170.55px;top:640.00px;font-size:10.6px;color:#000;letter-spacing:0.186px;">F7 - Reservar produtos desta venda?</div>
<div class="t" style="left:438.55px;top:617.00px;font-size:10.6px;color:#000;letter-spacing:0.129px;">F1 - Liberar valor da parcela</div>
<div class="t" style="left:438.55px;top:640.00px;font-size:10.6px;color:#000;letter-spacing:0.101px;">F2 - Liberar data de vencimento</div>
<div class="t" style="left:629.17px;top:617.00px;font-size:10.6px;color:#000;letter-spacing:0.030px;">Ctrl+F12 - Fixar dia de vencimento</div>
<div style="left:15px;top:670px;width:107px;height:36px;background:#696969"></div>
<div style="left:15px;top:670px;width:106px;height:35px;background:#ffffff"></div>
<div style="left:16px;top:671px;width:105px;height:34px;background:#a0a0a0"></div>
<div style="left:16px;top:671px;width:104px;height:33px;background:#f0f0f0"></div>
<div style="left:126px;top:670px;width:107px;height:36px;background:#696969"></div>
<div style="left:126px;top:670px;width:106px;height:35px;background:#ffffff"></div>
<div style="left:127px;top:671px;width:105px;height:34px;background:#a0a0a0"></div>
<div style="left:127px;top:671px;width:104px;height:33px;background:#f0f0f0"></div>
<svg style="position:absolute;left:18px;top:674px" width="30" height="28" viewBox="0 0 30 28">
<defs><linearGradient id="gc" x1="0" y1="0" x2="0.3" y2="1"><stop offset="0" stop-color="#2a9a0e"/><stop offset="0.7" stop-color="#4cb82a"/><stop offset="1" stop-color="#9be87a"/></linearGradient></defs>
<ellipse cx="13.6" cy="22.2" rx="4" ry="0.6" fill="#d4d4dc"/>
<path d="M5.4 12.4 Q9.4 13.2 12.4 15.8 Q16 10 23 4.8 Q16.8 12.4 12.8 21.5 Q7.6 17.2 5.4 12.4 Z" fill="url(#gc)"/>
</svg>
<div class="t" style="left:44.52px;top:683.00px;font-size:11px;color:#000;letter-spacing:-0.127px;">F9 - <u>C</u>onfirmar</div>
<svg style="position:absolute;left:152px;top:674px" width="32" height="28" viewBox="0 0 32 28">
<defs><linearGradient id="gd" x1="0" y1="0" x2="0" y2="1"><stop offset="0" stop-color="#e6f8ff"/><stop offset="1" stop-color="#7fd2f6"/></linearGradient></defs>
<rect x="8.9" y="4.9" width="10.2" height="13.4" fill="url(#gd)" stroke="#3f5b6f" stroke-width="1.4"/>
<path d="M4.8 18.3 L8.6 18.3" stroke="#5e5e2a" stroke-width="1.4"/>
<path d="M19.4 18.3 L22.8 18.3" stroke="#3f5b6f" stroke-width="1.4"/>
<path d="M7 19.6 L13 23.6" stroke="#b8b8b8" stroke-width="1.2"/>
<path d="M8.6 5.4 L14.9 10.3 L14.9 23.8 L8.6 18.6 Z" fill="#858510" stroke="#4a4a06" stroke-width="0.6"/>
<path d="M12.2 15.3 L13.4 16.3" stroke="#111" stroke-width="1.1"/>
<path d="M21 13.3 L24.6 10.1 L24.6 12 L27.1 12 L27.1 14.7 L24.6 14.7 L24.6 16.7 Z" fill="#0b22a6"/>
</svg>
<div class="t" style="left:182.50px;top:683.00px;font-size:11px;color:#000;letter-spacing:-0.022px;"><u>S</u>air</div>
<div style="left:1261px;top:182px;width:5px;height:1px;background:#c4c4c4"></div>
<div style="left:1261px;top:183px;width:5px;height:42px;background:#f0f0f0"></div>
<div style="left:1261px;top:206px;width:5px;height:1px;background:#6a6a6a"></div>
<div style="left:1262px;top:215px;width:4px;height:6px;background:#4a3a20"></div>
<div style="left:1261px;top:225px;width:5px;height:2px;background:#000"></div>
<div style="left:1261px;top:247px;width:5px;height:1px;background:#8a8a8a"></div>
<svg style="position:absolute;left:1261px;top:232px" width="5" height="12" viewBox="0 0 5 12"><path d="M1.5 11 L4.5 1" stroke="#3a4a8a" stroke-width="1.2"/></svg>
<div style="left:1261px;top:268px;width:5px;height:1px;background:#8a8a8a"></div>
<svg style="position:absolute;left:1261px;top:253px" width="5" height="12" viewBox="0 0 5 12"><path d="M1.5 11 L4.5 1" stroke="#3a4a8a" stroke-width="1.2"/></svg>
<div style="left:1261px;top:289px;width:5px;height:1px;background:#8a8a8a"></div>
<svg style="position:absolute;left:1261px;top:274px" width="5" height="12" viewBox="0 0 5 12"><path d="M1.5 11 L4.5 1" stroke="#3a4a8a" stroke-width="1.2"/></svg>
<div style="left:1261px;top:310px;width:5px;height:1px;background:#8a8a8a"></div>
<svg style="position:absolute;left:1261px;top:295px" width="5" height="12" viewBox="0 0 5 12"><path d="M1.5 11 L4.5 1" stroke="#3a4a8a" stroke-width="1.2"/></svg>
<div style="left:1261px;top:331px;width:5px;height:1px;background:#8a8a8a"></div>
<svg style="position:absolute;left:1261px;top:316px" width="5" height="12" viewBox="0 0 5 12"><path d="M1.5 11 L4.5 1" stroke="#3a4a8a" stroke-width="1.2"/></svg>
<div style="left:1261px;top:352px;width:5px;height:1px;background:#8a8a8a"></div>
<svg style="position:absolute;left:1261px;top:337px" width="5" height="12" viewBox="0 0 5 12"><path d="M1.5 11 L4.5 1" stroke="#3a4a8a" stroke-width="1.2"/></svg>
<div style="left:952px;top:126px;width:311px;height:279px;background:rgba(0,0,0,0.45);filter:blur(1.1px)"></div>
<div style="left:946px;top:120px;width:315px;height:283px;background:#cccccc"></div>
<div style="left:947px;top:121px;width:313px;height:281px;background:#f2f2f2"></div>
<div style="left:947px;top:121px;width:30px;height:281px;background:#f0f0f0"></div>
<div class="t" style="left:980.12px;top:128.00px;font-size:12px;color:#000;letter-spacing:-0.167px;">Ir para grade planos - F3</div>
<div class="t" style="left:980.24px;top:150.00px;font-size:12px;color:#000;letter-spacing:-0.299px;">Pesquisar planos - CTRL+P</div>
<div class="t" style="left:981.20px;top:179.00px;font-size:12px;color:#000;letter-spacing:-0.143px;">Alterar número de parcelas - F5</div>
<div class="t" style="left:980.24px;top:201.00px;font-size:12px;color:#000;letter-spacing:-0.070px;">Digitar valor de entrada - F8</div>
<div class="t" style="left:980.24px;top:230.00px;font-size:12px;color:#000;">Permitir arredodamento automático? - F11</div>
<div class="t" style="left:980.24px;top:252.00px;font-size:12px;color:#000;letter-spacing:-0.245px;">Reservar produtos desta venda? - F7</div>
<div class="t" style="left:980.24px;top:281.00px;font-size:12px;color:#000;letter-spacing:-0.194px;">Liberar valor da parcela - F1</div>
<div class="t" style="left:980.24px;top:303.00px;font-size:12px;color:#000;letter-spacing:-0.071px;">Liberar data de vencimento - F2</div>
<div class="t" style="left:980.24px;top:332.00px;font-size:12px;color:#000;letter-spacing:-0.180px;">Fixar dia de vencimento - CTRL+F12</div>
<div class="t" style="left:980.12px;top:354.00px;font-size:12px;color:#000;letter-spacing:0.034px;">Informar vencimento em número de DIAS</div>
<div class="t" style="left:980.60px;top:383.00px;font-size:12px;color:#000;">Consultar saldo de crédito do cliente</div>
<div style="left:977px;top:170px;width:281px;height:1px;background:#d7d7d7"></div>
<div style="left:977px;top:221px;width:281px;height:1px;background:#d7d7d7"></div>
<div style="left:977px;top:272px;width:281px;height:1px;background:#d7d7d7"></div>
<div style="left:977px;top:323px;width:281px;height:1px;background:#d7d7d7"></div>
<div style="left:977px;top:374px;width:281px;height:1px;background:#d7d7d7"></div>
<div style="left:949px;top:349px;width:22px;height:22px;background:#91c9f7"></div>
<svg style="position:absolute;left:952px;top:352px" width="16" height="16" viewBox="0 0 16 16"><path d="M3 7.5 L6.5 11 L13 4" stroke="#333" stroke-width="1.5" fill="none"/></svg>
</body></html>
